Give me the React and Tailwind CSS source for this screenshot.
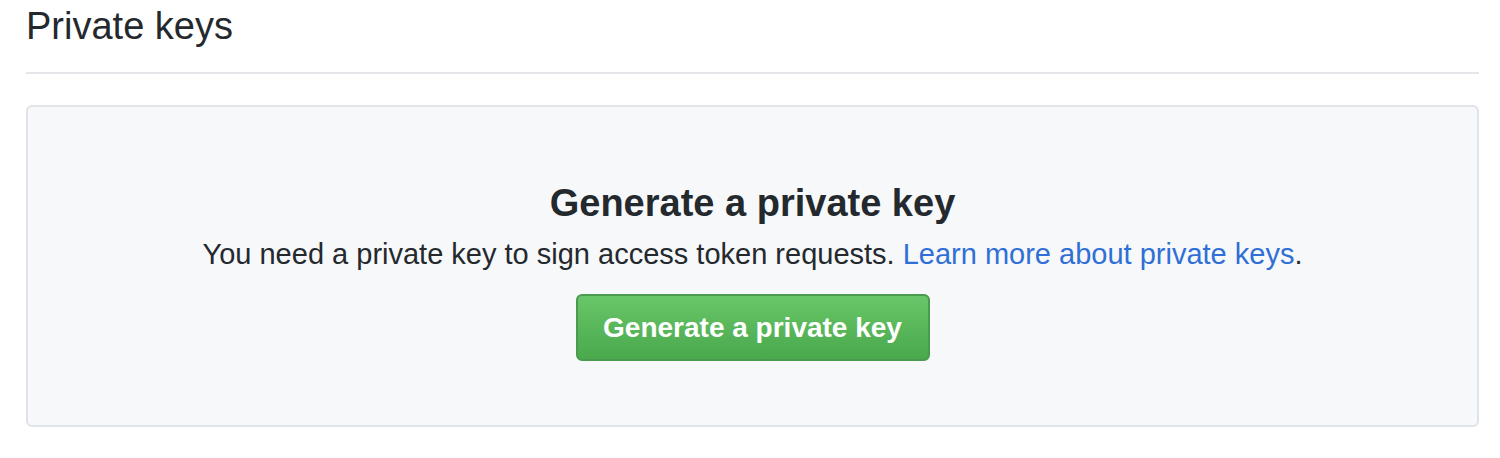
export default function App() {
  return (
    <div
      className="w-[1500px] h-[458px] bg-white pl-[26px] pr-[21px] pt-[2px] text-[#24292e]"
      style={{ fontFamily: '"Liberation Sans", Arial, sans-serif' }}
    >
      <h2 className="text-[38px] leading-[48px] font-normal pb-[22px] border-b-2 border-[#e4e6e9]">
        Private keys
      </h2>

      <div className="mt-[31px] h-[322px] rounded-[6px] border-2 border-[#e0e3e7] bg-[#f7f8fa] flex flex-col items-center pt-[72px]">
        <h3 className="text-[38px] leading-[48px] font-bold">Generate a private key</h3>
        <p className="text-[29px] leading-[40px] mt-[7px]">
          You need a private key to sign access token requests.{" "}
          <a href="#" className="text-[#2f6fd6]">
            Learn more about private keys
          </a>
          .
        </p>
        <button
          type="button"
          className="mt-[20px] w-[354px] h-[67px] rounded-[6px] border-2 border-[#4a9b4e] bg-gradient-to-b from-[#68c768] to-[#4aa84d] text-white text-[28px] font-bold"
        >
          Generate a private key
        </button>
      </div>
    </div>
  );
}
